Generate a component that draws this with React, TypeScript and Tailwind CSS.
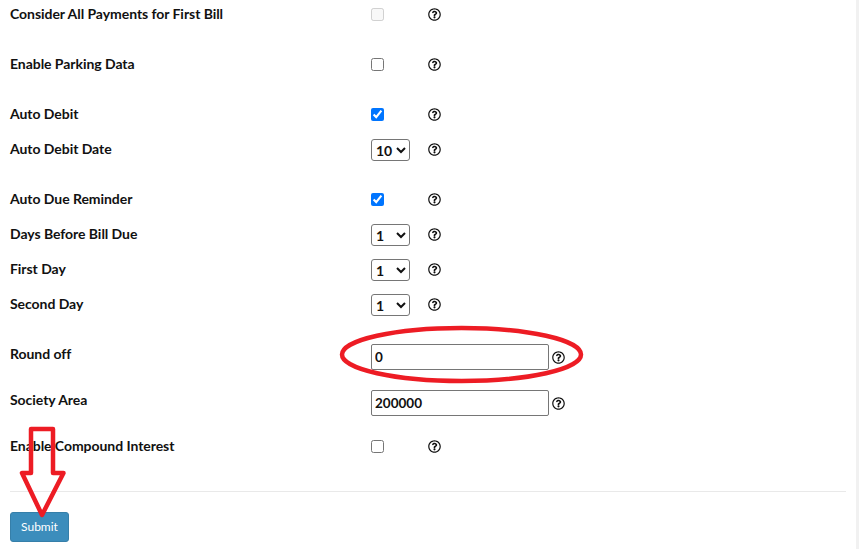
import { ReactNode } from "react";
import { FaRegQuestionCircle } from "react-icons/fa";

const FONT = "font-['Lato','Noto_Sans',sans-serif]";

function Help({ className = "" }: { className?: string }) {
  return <FaRegQuestionCircle className={`-ml-[0.5px] text-[13px] text-[#111] ${className}`} />;
}

function Row({ label, mt, children }: { label: string; mt: string; children: ReactNode }) {
  return (
    <div className={`flex h-[28px] items-center ${mt}`}>
      <label className="-mt-[2px] w-[361px] shrink-0 text-[14px] font-bold tracking-[-0.05px] text-[#111]">{label}</label>
      {children}
    </div>
  );
}

function Check({ checked, disabled }: { checked?: boolean; disabled?: boolean }) {
  return (
    <div className="flex w-[57px] items-center">
      <input type="checkbox" defaultChecked={checked} disabled={disabled} className="m-0 h-[13px] w-[13px]" />
    </div>
  );
}

function Sel({ value }: { value: string }) {
  return (
    <div className="flex w-[57px] items-center">
      <select
        defaultValue={value}
        className="mt-[2px] h-[22px] w-[39px] rounded-[3px] border border-[#767676] bg-white text-[14px] font-bold text-[#111]"
      >
        <option>{value}</option>
      </select>
    </div>
  );
}

function TextField({ value }: { value: string }) {
  return (
    <div className="mt-[6px] flex items-center">
      <input
        defaultValue={value}
        className="h-[26px] w-[178px] rounded-[2px] border border-[#767676] px-[3px] text-[13.5px] font-bold text-[#111]"
      />
      <Help className="ml-[3px]" />
    </div>
  );
}

export default function App() {
  return (
    <div className={`relative flex h-[549px] w-[859px] overflow-hidden bg-white ${FONT}`}>
      <div className="w-[856px] pl-[10px] pr-[10px]">
        <Row label="Consider All Payments for First Bill" mt="">
          <Check disabled />
          <Help />
        </Row>
        <Row label="Enable Parking Data" mt="mt-[22px]">
          <Check />
          <Help />
        </Row>
        <Row label="Auto Debit" mt="mt-[22px]">
          <Check checked />
          <Help />
        </Row>
        <Row label="Auto Debit Date" mt="mt-[7px]">
          <Sel value="10" />
          <Help />
        </Row>
        <Row label="Auto Due Reminder" mt="mt-[22px]">
          <Check checked />
          <Help />
        </Row>
        <Row label="Days Before Bill Due" mt="mt-[7px]">
          <Sel value="1" />
          <Help />
        </Row>
        <Row label="First Day" mt="mt-[7px]">
          <Sel value="1" />
          <Help />
        </Row>
        <Row label="Second Day" mt="mt-[7px]">
          <Sel value="1" />
          <Help />
        </Row>
        <Row label="Round off" mt="mt-[22px]">
          <TextField value="0" />
        </Row>
        <Row label="Society Area" mt="mt-[18px]">
          <TextField value="200000" />
        </Row>
        <Row label="Enable Compound Interest" mt="mt-[18px]">
          <Check />
          <Help />
        </Row>
        <hr className="mt-[31px] border-t border-[#e9e9e9]" />
        <button className="mt-[20px] h-[30px] w-[59px] rounded-[3px] border border-[#367fa9] bg-[#3c8dbc] text-[12px] text-white">
          Submit
        </button>
      </div>
      <div className="w-[3px] bg-[#f1f1f1]" />

      {/* red annotations drawn on top of the form */}
      <svg className="pointer-events-none absolute left-0 top-0" width="859" height="549" fill="none" stroke="#ed1c24" strokeWidth="4.5">
        <ellipse cx="461.5" cy="354.5" rx="119.5" ry="26.5" />
        <path d="M31 429H53V473H63.5L42 515L22 473H31Z" strokeLinejoin="round" />
      </svg>
    </div>
  );
}
